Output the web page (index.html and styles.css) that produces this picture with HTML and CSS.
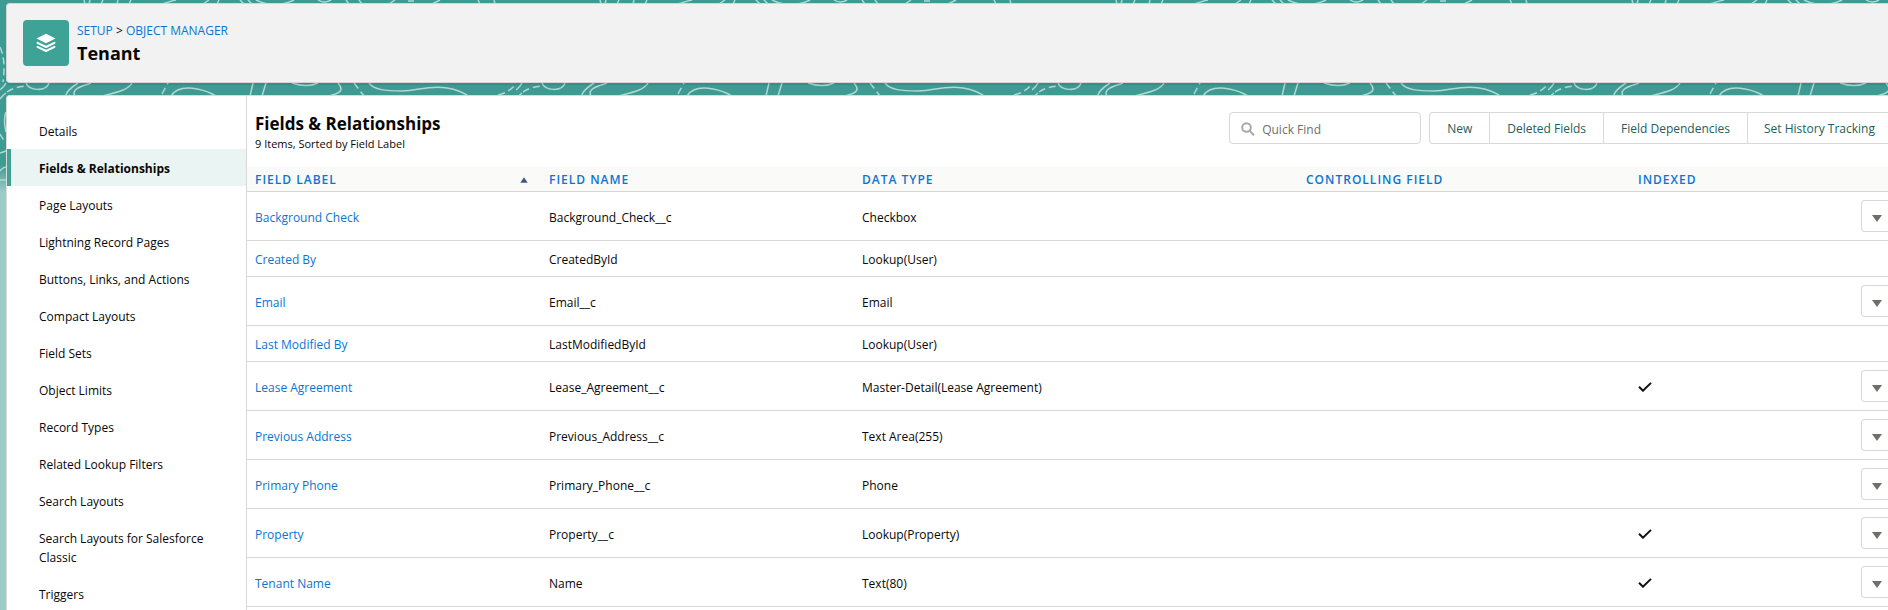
FILE: index.html
```html
<!DOCTYPE html>
<html lang="en">
<head>
<meta charset="utf-8">
<title>Tenant - Object Manager</title>
<link rel="stylesheet" href="styles.css">
</head>
<body>
<svg class="backdrop" aria-hidden="true">
  <defs>
    <pattern id="contours" width="516" height="190" patternUnits="userSpaceOnUse">
      <g fill="none" stroke="#b0d7d3" stroke-width="1.500">
        <path d="M26 83C29 91 46 92 49 83M70 95C63 100 64 92 78 83M75 96C70 88 86 85 91 83M102 96C118 92 128 90 132 83M171 96C176 88 186 87 197 89S211 93 216 96M250 96L253 83M262 96L266 83M292 83Q307 88 318 83M338 83C344 90 341 93 329 96M369 83C374 90 386 91 402 91S428 85 447 88Q460 90 470 97"/>
        <path d="M84 0L85 4M90 0L89 4M103 0L101 4M118 0L117 4M131 0L129 4M162 4Q171 1 176 0M203 4L209 0M217 4L219 0M240 0L244 4M248 0L252 4M256 0Q262 3 268 4M282 4Q290 2 294 0M318 0Q324 4 331 0M346 0L349 4M359 0L362 4M389 4L395 0M408 1H414M432 4L440 0M478 0L480 4M494 0L495 4"/>
        <path d="M6 112Q3 120 6 132M0 153L6 151M0 171Q3 167 6 167M0 180L6 180M0 90Q4 87 6 83M0 99Q2 96 6 93"/>
        <path stroke-dasharray="7 4" d="M7 92Q14 87 26 86M162 94L169 81M354 83L364 96M498 95Q511 92 517 82M0 47Q6 60 3 82M0 134Q2 138 6 143"/>
      </g>
    </pattern>
  </defs>
  <rect width="100%" height="190" fill="url(#contours)"/>
</svg>
<div class="page">
  <header class="page-header">
    <span class="object-icon">
      <svg viewBox="0 0 20 20" width="20" height="20" aria-hidden="true"><path fill="#fff" d="M10 .8 19.5 5.500 10 10.200.5 5.500z"/><path fill="none" stroke="#fff" stroke-width="2" stroke-linecap="round" stroke-linejoin="round" d="M1.500 9.800 10 14l8.500-4.200M1.500 13.900 10 18l8.500-4.100"/></svg>
    </span>
    <div>
      <nav class="crumbs" aria-label="Breadcrumb"><a href="#">SETUP</a> &gt; <a href="#">OBJECT MANAGER</a></nav>
      <h1>Tenant</h1>
    </div>
  </header>
  <div class="panel">
    <nav class="side" aria-label="Object">
      <a href="#">Details</a>
      <a href="#" class="active" aria-current="page">Fields &amp; Relationships</a>
      <a href="#">Page Layouts</a>
      <a href="#">Lightning Record Pages</a>
      <a href="#">Buttons, Links, and Actions</a>
      <a href="#">Compact Layouts</a>
      <a href="#">Field Sets</a>
      <a href="#">Object Limits</a>
      <a href="#">Record Types</a>
      <a href="#">Related Lookup Filters</a>
      <a href="#">Search Layouts</a>
      <a href="#">Search Layouts for Salesforce Classic</a>
      <a href="#">Triggers</a>
    </nav>
    <main class="content">
      <div class="toolbar">
        <div class="heading">
          <h2>Fields &amp; Relationships</h2>
          <p>9 Items, Sorted by Field Label</p>
        </div>
        <div class="actions">
          <label class="search">
            <svg viewBox="0 0 14 14" width="14" height="14" aria-hidden="true"><circle cx="5.500" cy="5.500" r="4.300"/><path d="M8.700 8.900 13 13.200"/></svg>
            <input type="search" placeholder="Quick Find" aria-label="Quick Find">
          </label>
          <div class="group">
            <button type="button">New</button>
            <button type="button">Deleted Fields</button>
            <button type="button">Field Dependencies</button>
            <button type="button">Set History Tracking</button>
          </div>
        </div>
      </div>
      <table>
        <colgroup><col class="c-label"><col class="c-name"><col class="c-type"><col class="c-control"><col class="c-indexed"><col class="c-menu"></colgroup>
        <thead>
          <tr>
            <th scope="col" aria-sort="ascending"><span class="sorted">FIELD LABEL <svg viewBox="0 0 8 6" width="8" height="6" aria-hidden="true"><path d="M4 0.300 7.700 5.700H.3z"/></svg></span></th>
            <th scope="col">FIELD NAME</th>
            <th scope="col">DATA TYPE</th>
            <th scope="col">CONTROLLING FIELD</th>
            <th scope="col">INDEXED</th>
            <td></td>
          </tr>
        </thead>
        <tbody>
          <tr><td><a href="#">Background Check</a></td><td>Background_Check__c</td><td>Checkbox</td><td></td><td></td><td><button type="button" class="menu" aria-label="Actions for Background Check"><svg viewBox="0 0 10 7" width="10" height="7"><path d="M0 0h10L5 7z"/></svg></button></td></tr>
          <tr><td><a href="#">Created By</a></td><td>CreatedById</td><td>Lookup(User)</td><td></td><td></td><td></td></tr>
          <tr><td><a href="#">Email</a></td><td>Email__c</td><td>Email</td><td></td><td></td><td><button type="button" class="menu" aria-label="Actions for Email"><svg viewBox="0 0 10 7" width="10" height="7"><path d="M0 0h10L5 7z"/></svg></button></td></tr>
          <tr><td><a href="#">Last Modified By</a></td><td>LastModifiedById</td><td>Lookup(User)</td><td></td><td></td><td></td></tr>
          <tr><td><a href="#">Lease Agreement</a></td><td>Lease_Agreement__c</td><td>Master-Detail(Lease Agreement)</td><td></td><td><svg class="check" viewBox="0 0 14 10" width="14" height="10" role="img" aria-label="Indexed"><path d="M1 4.800 5 8.700 13 .9"/></svg></td><td><button type="button" class="menu" aria-label="Actions for Lease Agreement"><svg viewBox="0 0 10 7" width="10" height="7"><path d="M0 0h10L5 7z"/></svg></button></td></tr>
          <tr><td><a href="#">Previous Address</a></td><td>Previous_Address__c</td><td>Text Area(255)</td><td></td><td></td><td><button type="button" class="menu" aria-label="Actions for Previous Address"><svg viewBox="0 0 10 7" width="10" height="7"><path d="M0 0h10L5 7z"/></svg></button></td></tr>
          <tr><td><a href="#">Primary Phone</a></td><td>Primary_Phone__c</td><td>Phone</td><td></td><td></td><td><button type="button" class="menu" aria-label="Actions for Primary Phone"><svg viewBox="0 0 10 7" width="10" height="7"><path d="M0 0h10L5 7z"/></svg></button></td></tr>
          <tr><td><a href="#">Property</a></td><td>Property__c</td><td>Lookup(Property)</td><td></td><td><svg class="check" viewBox="0 0 14 10" width="14" height="10" role="img" aria-label="Indexed"><path d="M1 4.800 5 8.700 13 .9"/></svg></td><td><button type="button" class="menu" aria-label="Actions for Property"><svg viewBox="0 0 10 7" width="10" height="7"><path d="M0 0h10L5 7z"/></svg></button></td></tr>
          <tr><td><a href="#">Tenant Name</a></td><td>Name</td><td>Text(80)</td><td></td><td><svg class="check" viewBox="0 0 14 10" width="14" height="10" role="img" aria-label="Indexed"><path d="M1 4.800 5 8.700 13 .9"/></svg></td><td><button type="button" class="menu" aria-label="Actions for Tenant Name"><svg viewBox="0 0 10 7" width="10" height="7"><path d="M0 0h10L5 7z"/></svg></button></td></tr>
        </tbody>
      </table>
    </main>
  </div>
</div>
</body>
</html>
```
FILE: styles.css
```css
* { box-sizing: border-box; }
html { height: 100%; overflow: hidden; }
body {
  margin: 0;
  height: 100%;
  overflow: hidden;
  font: 12px/19px "Open Sans", "Noto Sans", sans-serif;
  color: #080707;
  background: linear-gradient(#3e9b93 0, #3e9b93 165px, #9ccbc8 192px);
}
a { color: #0a75d1; text-decoration: none; }
h1, h2, p { margin: 0; }
button, input { font: inherit; }

.backdrop { position: absolute; top: 0; left: 0; width: 100%; height: 190px; }
.page {
  position: relative;
  display: flex;
  flex-direction: column;
  gap: 12px;
  height: 100%;
  padding: 3px 0 0 6px;
}

.page-header {
  display: flex;
  gap: 8px;
  padding: 16px;
  border: 1px solid #d8d6d4;
  border-right: 0;
  border-radius: 4px 0 0 4px;
  background: #f2f2f2;
  box-shadow: 0 2px 2px rgba(0, 0, 0, .1);
}
.object-icon {
  display: grid;
  place-items: center;
  width: 46px;
  height: 46px;
  border-radius: 4px;
  background: #3fa296;
}
.crumbs { line-height: 22px; }
h1 { font-size: 18px; line-height: 22px; font-weight: 700; }

.panel {
  flex: 1;
  min-height: 0;
  display: flex;
  border: 1px solid #dddbda;
  border-width: 1px 0 0 1px;
  border-radius: 4px 0 0 0;
  background: #fff;
}
.side {
  flex: 0 0 240px;
  padding-top: 16px;
  border-right: 1px solid #d8d8d8;
}
.side a {
  display: block;
  padding: 10px 28px 8px 32px;
  color: #080707;
}
.side .active {
  padding-left: 28px;
  border-left: 4px solid #3fa296;
  background: #eaf4f3;
  font-weight: 700;
}

.content { flex: 1; min-width: 0; }
.toolbar {
  display: flex;
  justify-content: space-between;
  height: 71px;
  padding: 16px 0 0 8px;
}
h2 { font-size: 17px; line-height: 24px; font-weight: 700; }
.heading p { font-size: 11px; line-height: 16px; }
.actions { display: flex; gap: 8px; height: 32px; }
.search {
  display: flex;
  align-items: center;
  gap: 7px;
  width: 192px;
  padding: 2px 11px 0;
  border: 1px solid #d8d8d8;
  border-radius: 4px;
}
.search svg { flex: none; fill: none; stroke: #aaa8a6; stroke-width: 2; }
.search input { width: 100%; padding: 0; border: 0; outline: 0; background: none; }
.search input::placeholder { color: #706e6b; }
.group {
  display: flex;
  border: 1px solid #d8d8d8;
  border-right: 0;
  border-radius: 4px 0 0 4px;
}
.group button {
  padding: 0 17px;
  border: 0;
  background: none;
  color: #23605b;
  white-space: nowrap;
}
.group button + button { border-left: 1px solid #d8d8d8; }
.group button:last-child { padding: 0 13px 0 16px; }

table { width: 100%; border-collapse: collapse; table-layout: fixed; }
.c-label { width: 294px; }
.c-name { width: 313px; }
.c-type { width: 444px; }
.c-control { width: 332px; }
.c-menu { width: 34px; }
th, td { padding: 2px 8px 0; text-align: left; border-bottom: 1px solid #d8d8d8; }
thead tr { background: #fafaf9; }
th { height: 24px; color: #0a75d1; font-weight: 600; letter-spacing: 1px; }
.sorted { display: flex; align-items: center; justify-content: space-between; padding-right: 5px; }
.sorted svg { fill: #3e5a78; }
tbody td { height: 36px; padding-top: 3px; }
tbody td:last-child { padding: 0 0 0 7px; }
.check { display: block; fill: none; stroke: #111; stroke-width: 2; }
.menu {
  display: block;
  width: 27px;
  height: 32px;
  margin: 8px 0;
  padding: 5px 0 0 10px;
  border: 1px solid #d8d8d8;
  border-right: 0;
  border-radius: 4px 0 0 4px;
  background: #fff;
}
.menu svg { display: block; fill: #706e6b; }
```
